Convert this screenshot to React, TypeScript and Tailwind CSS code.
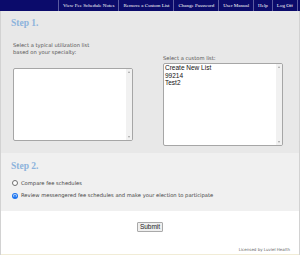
const navItems = ['View Fee Schedule Notes', 'Remove a Custom List', 'Change Password', 'User Manual', 'Help', 'Log Off'];

function ListBox({ options, height }: { options: string[]; height: string }) {
  return (
    <div className={`${height} w-[120px] flex bg-white border border-[#a6a6a6] rounded-[2px] overflow-hidden`}>
      <div className="flex-1 font-['Liberation_Sans',Arial,sans-serif] text-[6.5px] leading-[7.5px] text-[#111] pl-[1px]">
        {options.map((o) => (
          <div key={o}>{o}</div>
        ))}
      </div>
      {/* fake scrollbar */}
      <div className="w-[6px] bg-[#f1f1f1] flex flex-col items-center justify-between py-[2px]">
        <div className="w-0 h-0 border-x-[1.5px] border-x-transparent border-b-[2px] border-b-[#a3a3a3]" />
        <div className="w-0 h-0 border-x-[1.5px] border-x-transparent border-t-[2px] border-t-[#a3a3a3]" />
      </div>
    </div>
  );
}

function Radio({ checked, label }: { checked?: boolean; label: string }) {
  return (
    <div className="flex items-start gap-[3px] ml-[1px] leading-[7px]">
      {checked ? (
        <div className="w-[6px] h-[6px] mt-[0.5px] rounded-full bg-[#1a73f0] flex items-center justify-center">
          <div className="w-[3.5px] h-[3.5px] rounded-full bg-[#a9cbfa] flex items-center justify-center">
            <div className="w-[2px] h-[2px] rounded-full bg-[#1a73f0]" />
          </div>
        </div>
      ) : (
        <div className="w-[6px] h-[6px] mt-[0.5px] rounded-full bg-white border border-[#6f6f6f]" />
      )}
      <span>{label}</span>
    </div>
  );
}

export default function App() {
  return (
    <div className="w-[300px] h-[255px] flex flex-col bg-white overflow-hidden font-['DejaVu_Sans',Verdana,sans-serif]">
      {/* Top nav */}
      <nav className="h-[11px] bg-[#0b0b6b] flex justify-end pr-[2px] font-['Liberation_Serif','Times_New_Roman',serif] text-[5px] text-white">
        {navItems.map((item) => (
          <div key={item} className="flex items-center px-[4px] border-l border-[#5b5ba0] last:border-r whitespace-nowrap">
            {item}
          </div>
        ))}
      </nav>

      <div className="flex-1 flex flex-col border-x border-[#d2d2d2]">
        {/* Step 1 */}
        <section className="h-[142px] bg-[#e8e8e8] px-[10px] pt-[7px]">
          <h2 className="font-['Liberation_Serif','Times_New_Roman',serif] font-bold text-[9.5px] leading-[11px] text-[#8db3dc]">
            Step 1.
          </h2>
          <div className="flex gap-[30px] pl-[2px]">
            <div className="w-[120px]">
              <p className="mt-[12.5px] text-[5.2px] leading-[7px] text-[#555]">
                Select a typical utilization list
                <br />
                based on your specialty:
              </p>
              <div className="mt-[12.5px]">
                <ListBox options={[]} height="h-[73px]" />
              </div>
            </div>
            <div className="w-[120px]">
              <p className="mt-[25.5px] text-[5.2px] leading-[7px] text-[#555]">Select a custom list:</p>
              <div className="mt-[1.5px]">
                <ListBox options={['Create New List', '99214', 'Test2']} height="h-[83px]" />
              </div>
            </div>
          </div>
        </section>

        {/* Step 2 */}
        <section className="h-[58px] bg-[#f0f0f0] px-[10px] pt-[8px] text-[5.2px] text-[#444]">
          <h2 className="font-['Liberation_Serif','Times_New_Roman',serif] font-bold text-[9.5px] leading-[11px] text-[#8db3dc]">
            Step 2.
          </h2>
          <div className="mt-[7.5px] flex flex-col gap-[5.5px]">
            <Radio label="Compare fee schedules" />
            <Radio checked label="Review messengered fee schedules and make your election to participate" />
          </div>
        </section>

        {/* Submit + footer */}
        <div className="flex-1 flex flex-col items-center border-b border-[#f1ecd6]">
          <button className="mt-[11px] h-[10px] px-[2px] flex items-center bg-[#efefef] border border-[#a9a9a9] rounded-[1px] font-['Liberation_Sans',Arial,sans-serif] text-[6.5px] text-[#222]">
            Submit
          </button>
          <p className="self-end mt-[15px] mr-[9px] text-[4px] leading-[5px] text-[#666]">Licensed by Luviel Health</p>
        </div>
      </div>
    </div>
  );
}
